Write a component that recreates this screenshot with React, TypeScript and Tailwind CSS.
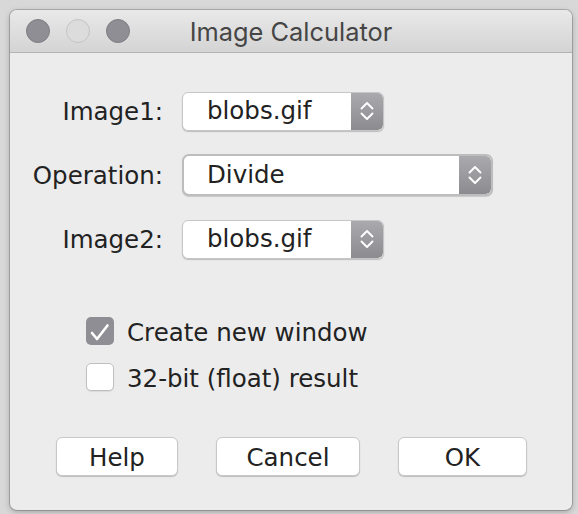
import React from "react";

const font = { fontFamily: '"DejaVu Sans", sans-serif' } as const;

function Stepper() {
  return (
    <div className="flex h-full w-[32px] items-center justify-center rounded-r-[5px] bg-gradient-to-b from-[#aaaaae] to-[#8c8c90]">
      <svg width="16" height="24" viewBox="0 0 16 24" fill="none">
        <path d="M2.5 9.5 L8 4 L13.5 9.5" stroke="white" strokeWidth="1.9" strokeLinecap="round" strokeLinejoin="round" />
        <path d="M2.5 14.5 L8 20 L13.5 14.5" stroke="white" strokeWidth="1.9" strokeLinecap="round" strokeLinejoin="round" />
      </svg>
    </div>
  );
}

function Select({ value, wide }: { value: string; wide?: boolean }) {
  return (
    <div
      className={
        wide
          ? "flex h-[42px] w-[311px] items-stretch overflow-hidden rounded-[7px] border-2 border-[#bdbdbd] bg-white shadow-[0_1px_1px_rgba(0,0,0,0.15)]"
          : "flex h-[39px] w-[202px] items-stretch overflow-hidden rounded-[6px] border border-[#c6c6c6] bg-white shadow-[0_1px_1px_rgba(0,0,0,0.2)]"
      }
    >
      <div className={wide ? "flex flex-1 items-center pl-[23px] pt-[1px] text-[24.5px] text-[#222]" : "flex flex-1 items-center pl-[24px] pt-[1px] text-[24.5px] text-[#222]"}>
        {value}
      </div>
      <Stepper />
    </div>
  );
}

function Checkbox({ checked, label }: { checked?: boolean; label: string }) {
  return (
    <div className="flex h-[46px] items-center gap-[13px]">
      {checked ? (
        <div className="flex h-[28px] w-[28px] items-center justify-center rounded-[5px] bg-[#8f8e94]">
          <svg width="28" height="28" viewBox="0 0 28 28" fill="none">
            <path d="M6 16 L11 22 L21.5 8.5" stroke="white" strokeWidth="2.6" strokeLinecap="round" strokeLinejoin="round" />
          </svg>
        </div>
      ) : (
        <div className="h-[28px] w-[28px] rounded-[5px] border border-[#bfbfbf] bg-white shadow-[0_1px_1px_rgba(0,0,0,0.08)]" />
      )}
      <span className="pt-[4px] text-[24.5px] text-[#222]">{label}</span>
    </div>
  );
}

function Button({ label, w }: { label: string; w: string }) {
  return (
    <div
      className={`flex h-[39px] ${w} items-center justify-center rounded-[6px] border border-[#c8c8c8] bg-white pt-[3px] text-[24.5px] text-[#222] shadow-[0_1px_1px_rgba(0,0,0,0.2)]`}
    >
      {label}
    </div>
  );
}

export default function App() {
  return (
    <div className="h-[514px] w-[578px] overflow-hidden bg-[#d8d8d8] pl-[10px] pt-[10px]" style={font}>
      <div className="flex h-[500px] w-[562px] flex-col overflow-hidden rounded-[7px] bg-[#ececec] shadow-[0_0_0_1px_rgba(0,0,0,0.18),0_2px_6px_rgba(0,0,0,0.25)]">
        <div className="grid h-[43px] grid-cols-[1fr_auto_1fr] items-center border-b border-[#b4b4b4] bg-gradient-to-b from-[#e9e9e9] to-[#d4d4d4]">
          <div className="flex items-center gap-[16px] pl-[16px]">
            <div className="h-[24px] w-[24px] rounded-full border border-[#7f7e84] bg-[#8f8e94]" />
            <div className="h-[24px] w-[24px] rounded-full border border-[#c4c4c4] bg-[#dcdcdc]" />
            <div className="h-[24px] w-[24px] rounded-full border border-[#7f7e84] bg-[#8f8e94]" />
          </div>
          <div className="pt-[2px] text-[25.4px] text-[#454545]" style={{ fontFamily: 'Inter, "Liberation Sans", sans-serif' }}>
            Image Calculator
          </div>
          <div />
        </div>

        <div className="grid grid-cols-[153px_auto] gap-x-[19px] pt-[26px]">
          <div className="flex h-[64px] items-center justify-end pt-[3px] text-[24.5px] text-[#222]">Image1:</div>
          <div className="flex h-[64px] items-center">
            <Select value="blobs.gif" />
          </div>
          <div className="flex h-[64px] items-center justify-end pt-[3px] text-[24.5px] text-[#222]">Operation:</div>
          <div className="flex h-[64px] items-center">
            <Select value="Divide" wide />
          </div>
          <div className="flex h-[64px] items-center justify-end pt-[3px] text-[24.5px] text-[#222]">Image2:</div>
          <div className="flex h-[64px] items-center">
            <Select value="blobs.gif" />
          </div>
        </div>

        <div className="mt-[37px] flex flex-col pl-[76px]">
          <Checkbox checked label="Create new window" />
          <Checkbox label="32-bit (float) result" />
        </div>

        <div className="mt-[37px] flex gap-[38px] pl-[46px]">
          <Button label="Help" w="w-[122px]" />
          <Button label="Cancel" w="w-[144px]" />
          <Button label="OK" w="w-[129px]" />
        </div>
      </div>
    </div>
  );
}
